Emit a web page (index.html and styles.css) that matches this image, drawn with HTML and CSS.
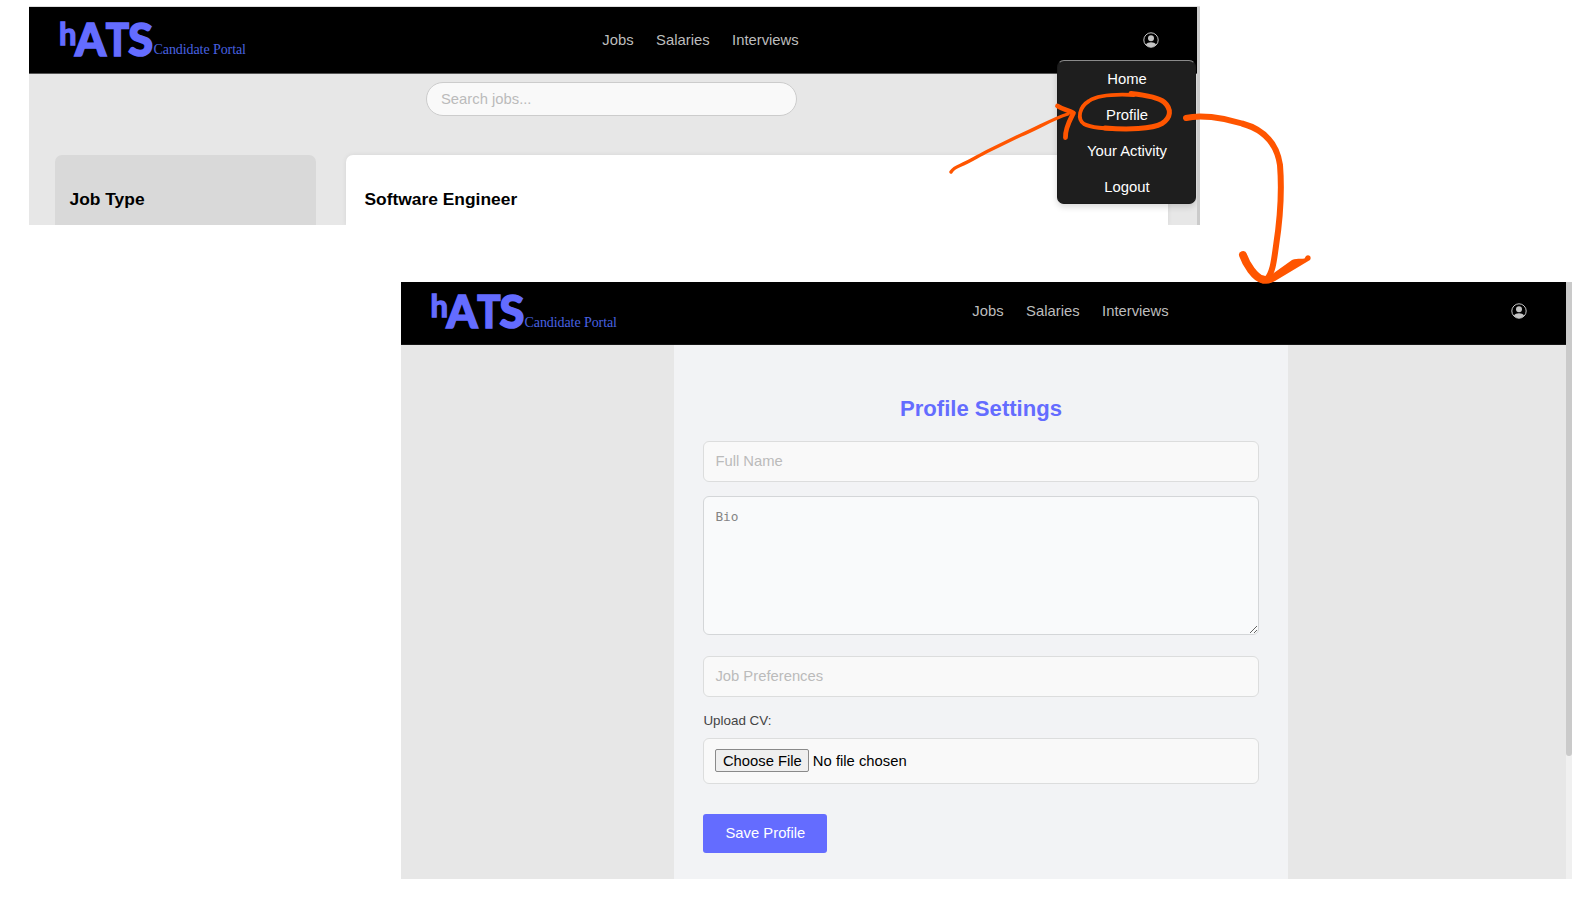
FILE: index.html
```
<!DOCTYPE html>
<html lang="en">
<head>
<meta charset="utf-8">
<title>hATS Candidate Portal</title>
<link rel="stylesheet" href="styles.css">
</head>
<body>
<svg class="defs" width="0" height="0">
  <symbol id="user" viewBox="0 0 16 16">
    <circle cx="8" cy="8" r="7.2" fill="none" stroke="#c4c4c4" stroke-width="1"/>
    <circle cx="8" cy="6.200" r="3" fill="#c4c4c4"/>
    <path d="M2.900 12.600C4 10.900 5.800 10.200 8 10.200s4 .7 5.100 2.400C11.900 14.200 10.100 15.200 8 15.200S4.100 14.200 2.900 12.600z" fill="#c4c4c4"/>
  </symbol>
</svg>

<section class="window window-jobs">
  <div class="page">
    <header class="header header-jobs">
      <svg class="logo" width="198" height="50" viewBox="0 -4 198 50">
        <text class="logo-h" x="-1" y="28.500">h</text>
        <text class="logo-ats" transform="translate(15 40) scale(.98 1)">A</text>
        <text class="logo-ats" transform="translate(45.800 40) scale(.86 1)">T</text>
        <text class="logo-ats" transform="translate(68.200 40) scale(1 1)">S</text>
        <text class="logo-sub" x="93.500" y="38" textLength="92.500">Candidate Portal</text>
      </svg>
      <nav class="nav"><a>Jobs</a><a>Salaries</a><a>Interviews</a></nav>
      <div class="account">
        <svg width="16" height="16"><use href="#user"/></svg>
        <div class="menu"><a>Home</a><a>Profile</a><a>Your Activity</a><a>Logout</a></div>
      </div>
    </header>
    <input class="search" type="text" placeholder="Search jobs...">
    <div class="columns">
      <aside class="filters"><h3>Job Type</h3></aside>
      <article class="job"><h3>Software Engineer</h3></article>
    </div>
  </div>
  <div class="scrollbar scrollbar-jobs"></div>
</section>

<section class="window window-profile">
  <div class="page">
    <header class="header header-profile">
      <svg class="logo" width="198" height="50" viewBox="0 -4 198 50">
        <text class="logo-h" x="-1.500" y="28">h</text>
        <text class="logo-ats" transform="translate(14.500 39.300) scale(.98 1)">A</text>
        <text class="logo-ats" transform="translate(45.200 39.300) scale(.86 1)">T</text>
        <text class="logo-ats" transform="translate(67.600 39.300) scale(1 1)">S</text>
        <text class="logo-sub" x="92.500" y="37.500" textLength="92.500">Candidate Portal</text>
      </svg>
      <nav class="nav"><a>Jobs</a><a>Salaries</a><a>Interviews</a></nav>
      <div class="account"><svg width="16" height="16"><use href="#user"/></svg></div>
    </header>
    <form class="panel">
      <h2>Profile Settings</h2>
      <input class="field" type="text" placeholder="Full Name">
      <textarea class="field bio" placeholder="Bio"></textarea>
      <input class="field" type="text" placeholder="Job Preferences">
      <div class="upload-label">Upload CV:</div>
      <div class="field file"><span class="choose">Choose File</span><span>No file chosen</span></div>
      <button class="save" type="button">Save Profile</button>
    </form>
  </div>
  <div class="scrollbar"><div class="thumb"></div></div>
</section>

<svg class="marks" width="1582" height="901" viewBox="0 0 1582 901">
  <g fill="none" stroke="#ff5500" stroke-linecap="round" stroke-linejoin="round">
    <path stroke-width="3.400" d="M951 172C953 169 956 167 960 165.500C970 161.500 978 156 987 151.500L1020 135.500C1038 128 1052 119 1068 114"/>
    <path stroke-width="4.800" d="M1057.500 106C1063 109.500 1069 110.500 1073.500 113C1070 120 1065 128 1065.500 137.500"/>
    <path stroke-width="3.800" d="M1134 95C1116 94 1098 95 1089 101C1079 107 1077 119 1084 124C1092 128.500 1110 129 1126 129"/>
    <path stroke-width="5" d="M1131 93.500C1145 95 1158 97 1164 102C1172 109 1171 118 1162 123.500C1152 129 1128 130 1105 128"/>
    <path stroke-width="6" d="M1186 118C1199 114.500 1222 117 1242 123.500C1266 130 1277 145 1280 165C1282 190 1280 220 1276 246C1274 260 1273 272 1267 279"/>
    <path stroke-width="8" d="M1243 255C1246 264 1255 278 1263 279.500"/>
  </g>
  <path fill="#ff5500" d="M1257 279C1261 285 1268 285 1275 281L1310 260C1312 257 1309 254 1306 256L1304.500 258.500C1301 259 1296 258 1292 260L1271 275C1266 277 1261 275 1257 279z"/>
</svg>
</body>
</html>
```
FILE: styles.css
```
* { box-sizing: border-box; }
body {
  margin: 0;
  padding-top: 7px;
  height: 901px;
  overflow: hidden;
  background: #fff;
  position: relative;
  font-family: "Liberation Sans", Arial, sans-serif;
  font-size: 14.8px;
}
h2, h3 { margin: 0; }
.defs { position: absolute; }
.logo { display: block; overflow: visible; }
.logo-h { font: 700 31px Lato, sans-serif; fill: #646cff; stroke: #646cff; stroke-width: 1.3px; }
.logo-ats { font: 900 45px Lato, sans-serif; fill: #646cff; stroke: #646cff; stroke-width: 1.6px; }
.logo-sub { font: 14px "Liberation Serif", serif; fill: #4862e0; }

.window { display: flex; background: #e7e7e7; }
.window-jobs { width: 1171px; height: 218px; margin-left: 29px; box-shadow: 0 -1px #dedede; }
.window-profile { width: 1171px; height: 597px; margin: 57px 0 0 401px; }
.page { flex: 1; display: flex; flex-direction: column; overflow: hidden; }
.scrollbar { width: 6px; background: #f0f0f0; }
.scrollbar-jobs { width: 3px; background: #cbcbcb; }
.thumb { height: 474px; background: #cacaca; border-radius: 0 0 3px 3px; }

.header {
  flex: none;
  display: flex;
  justify-content: space-between;
  align-items: center;
  background: #000;
  padding: 0 38px 0 31px;
}
.header-jobs { height: 67px; border-bottom: 1px solid #555; }
.header-profile { height: 63px; padding-right: 39px; padding-bottom: 4px; border-bottom: 1px solid #161616; }
.header .logo { margin-top: -6px; }
.header-profile .logo { margin-top: -3px; }
.nav { display: flex; gap: 22.500px; color: #bdbdbd; }
.account { position: relative; display: flex; }
.menu {
  position: absolute;
  z-index: 2;
  top: 28px;
  right: -37px;
  width: 139px;
  height: 144px;
  padding: 1px 0 0 1px;
  display: flex;
  flex-direction: column;
  background: #1e1e1e;
  color: #fff;
  border: 1px solid #1a1a1a;
  border-top-color: #8a8a8a;
  border-radius: 7px;
  box-shadow: 0 3px 6px rgba(0, 0, 0, .15);
}
.menu a { flex: none; height: 36px; line-height: 35px; text-align: center; }

.search {
  width: 371px;
  height: 34px;
  margin: 8px 0 0 397px;
  padding: 0 14px 1px;
  border: 1px solid #ccc;
  border-radius: 17px;
  background: #f9f9f9;
  font: inherit;
}
.columns { display: flex; gap: 30px; margin: 39px 29px 0 26px; flex: 1; }
.columns h3 { font-size: 17.400px; line-height: 20px; }
.filters { width: 261px; padding: 34px 14.500px 0; background: #d9d9d9; border-radius: 7px 7px 0 0; }
.job { flex: 1; padding: 34px 18.500px 0; background: #fff; border-radius: 7px 7px 0 0; box-shadow: 0 0 5px rgba(0, 0, 0, .08); }

.panel {
  flex: 1;
  width: 614px;
  margin-left: 273px;
  padding: 51px 29.400px 0;
  display: flex;
  flex-direction: column;
  background: #f2f3f5;
}
.panel h2 { font-size: 22.100px; line-height: 26px; text-align: center; color: #646cff; margin-bottom: 18.500px; }
.field {
  flex: none;
  display: block;
  width: 100%;
  height: 41px;
  margin: 0 0 14.200px;
  padding: 0 11px 1px;
  border: 1px solid #dcdddd;
  border-radius: 6px;
  background: #f9f9f9;
  font: inherit;
}
.field::placeholder, .search::placeholder { color: #bbb; opacity: 1; }
.bio {
  height: 139px;
  margin-bottom: 21px;
  padding: 12px 11px;
  border-color: #d4d6d8;
  background: #f9fafb;
  font: 12.800px "DejaVu Sans Mono", monospace;
}
.bio::placeholder { color: #858585; }
.upload-label { font-size: 13.400px; line-height: 16px; color: #444; margin: 2px 0 9px; }
.file { height: 46px; margin-bottom: 30px; padding: 0 11px; display: flex; align-items: center; gap: 3.500px; }
.choose {
  height: 23px;
  padding: 0 6.500px;
  line-height: 22px;
  border: 1px solid #8a8a8a;
  border-radius: 2px;
  background: #efefef;
}
.save {
  width: 124px;
  height: 39px;
  padding: 0 0 1px;
  border: 0;
  border-radius: 3px;
  background: #646cff;
  color: #fff;
  font: inherit;
}
.marks { position: absolute; z-index: 5; left: 0; top: 0; pointer-events: none; }
```
